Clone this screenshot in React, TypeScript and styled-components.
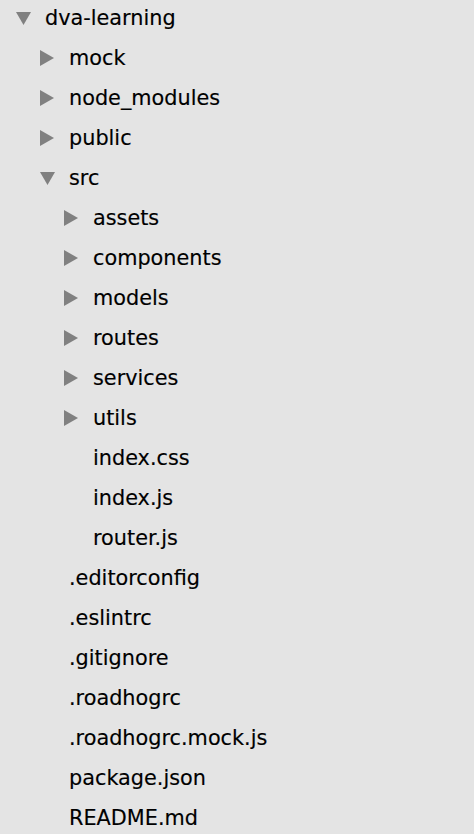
import React from "react";
import styled, { createGlobalStyle } from "styled-components";

const Global = createGlobalStyle`
  html, body { margin: 0; padding: 0; background: #e4e4e4; }
  body { font-family: "DejaVu Sans", "Liberation Sans", sans-serif; }
`;

type Node = { name: string; kind?: "open" | "closed"; children?: Node[] };

const tree: Node = {
  name: "dva-learning",
  kind: "open",
  children: [
    { name: "mock", kind: "closed" },
    { name: "node_modules", kind: "closed" },
    { name: "public", kind: "closed" },
    {
      name: "src",
      kind: "open",
      children: [
        { name: "assets", kind: "closed" },
        { name: "components", kind: "closed" },
        { name: "models", kind: "closed" },
        { name: "routes", kind: "closed" },
        { name: "services", kind: "closed" },
        { name: "utils", kind: "closed" },
        { name: "index.css" },
        { name: "index.js" },
        { name: "router.js" },
      ],
    },
    { name: ".editorconfig" },
    { name: ".eslintrc" },
    { name: ".gitignore" },
    { name: ".roadhogrc" },
    { name: ".roadhogrc.mock.js" },
    { name: "package.json" },
    { name: "README.md" },
  ],
};

const Panel = styled.div`
  width: 474px;
  height: 834px;
  overflow: hidden;
  background: #e4e4e4;
`;

const List = styled.ul`
  list-style: none;
  margin: -2px 0 0 0;
  padding: 0;
`;

const Row = styled.li<{ $level: number }>`
  display: flex;
  align-items: center;
  height: 40px;
  padding-left: ${(p) => 16 + p.$level * 24}px;
`;

const Toggle = styled.span`
  width: 29px;
  height: 20px;
  flex: none;
  display: flex;
  align-items: center;
`;

const Label = styled.span`
  font-size: 20.8px;
  color: #000;
  white-space: nowrap;
  -webkit-text-stroke: 0.15px #000;
`;

const Arrow = ({ open }: { open: boolean }) =>
  open ? (
    <svg width="15" height="13" viewBox="0 0 15 13">
      <polygon points="0,0 15,0 7.5,13" fill="#808080" />
    </svg>
  ) : (
    <svg width="14" height="16" viewBox="0 0 14 16">
      <polygon points="0,0 14,8 0,16" fill="#808080" />
    </svg>
  );

const flatten = (n: Node, level: number, out: { node: Node; level: number }[]) => {
  out.push({ node: n, level });
  if (n.kind === "open" && n.children) n.children.forEach((c) => flatten(c, level + 1, out));
  return out;
};

export default function App() {
  const rows = flatten(tree, 0, []);
  return (
    <Panel>
      <Global />
      <List>
        {rows.map(({ node, level }, i) => (
          <Row key={i} $level={level}>
            <Toggle>{node.kind && <Arrow open={node.kind === "open"} />}</Toggle>
            <Label>{node.name}</Label>
          </Row>
        ))}
      </List>
    </Panel>
  );
}
